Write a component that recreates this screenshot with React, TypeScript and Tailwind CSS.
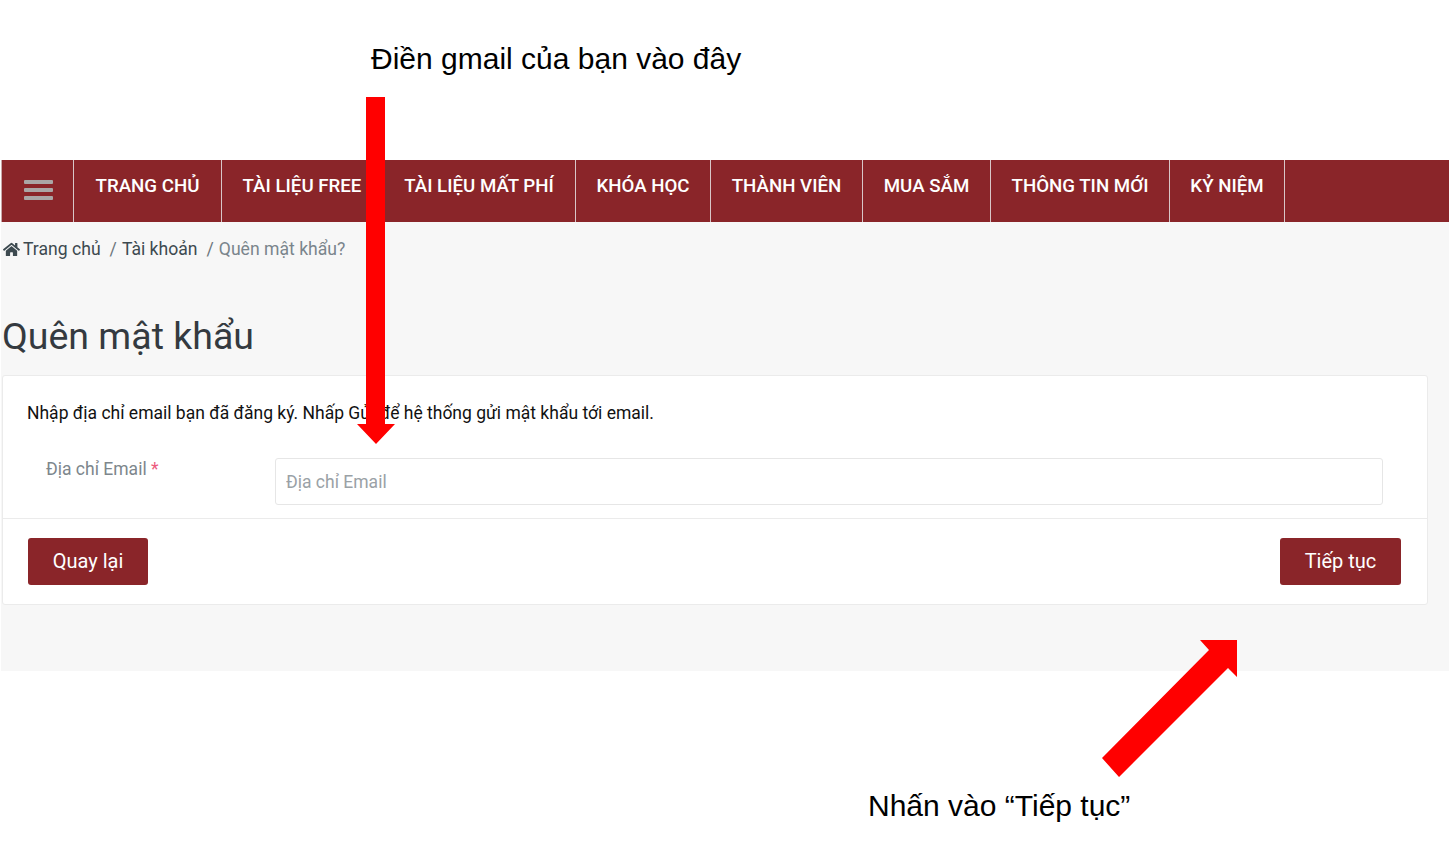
import React from 'react';
import { FaHome } from 'react-icons/fa';

const navItems = [
  { label: 'TRANG CHỦ', width: 'w-[148px]' },
  { label: 'TÀI LIỆU FREE', width: 'w-[161px]' },
  { label: 'TÀI LIỆU MẤT PHÍ', width: 'w-[193px]' },
  { label: 'KHÓA HỌC', width: 'w-[135px]' },
  { label: 'THÀNH VIÊN', width: 'w-[152px]' },
  { label: 'MUA SẮM', width: 'w-[128px]' },
  { label: 'THÔNG TIN MỚI', width: 'w-[179px]' },
  { label: 'KỶ NIỆM', width: 'w-[115px]' },
];

const App: React.FC = () => {
  return (
    <div className="relative w-[1449px] h-[860px] overflow-hidden bg-white font-['Roboto',sans-serif]">
      {/* Top note */}
      <div className="h-[160px] pl-[371px] pt-[40px] font-['Liberation_Sans',sans-serif] text-[30px] leading-[38px] text-black">
        Điền gmail của bạn vào đây
      </div>

      {/* Nav bar */}
      <nav className="flex h-[62px] ml-px bg-[#8a2529] text-white text-[18.7px] font-medium">
        <div className="w-px bg-[#c9a9aa] mr-px" />
        <div className="w-[71px] flex flex-col items-center justify-center gap-[4px] pb-[3px] pl-px border-r border-[#d9c6c7]">
          <span className="block w-[29px] h-[4px] rounded-[1px] bg-[#aaa6a6]" />
          <span className="block w-[29px] h-[4px] rounded-[1px] bg-[#aaa6a6]" />
          <span className="block w-[29px] h-[4px] rounded-[1px] bg-[#aaa6a6]" />
        </div>
        {navItems.map((item) => (
          <a
            key={item.label}
            href="#"
            className={`${item.width} flex justify-center pt-[13px] leading-[26px] border-r border-[#d9c6c7] whitespace-nowrap`}
          >
            {item.label}
          </a>
        ))}
      </nav>

      {/* Page */}
      <main className="h-[449px] ml-px bg-[#f7f7f7] pl-[1px] pr-[21px]">
        <div className="flex items-center h-[54px] text-[17.6px] text-[#3d4a50]">
          <FaHome className="w-[17px] h-[17px] ml-px mr-[3px]" />
          <span>Trang chủ</span>
          <span className="ml-[9px] mr-[5px] text-[#6c757d]">/</span>
          <span>Tài khoản</span>
          <span className="ml-[9px] mr-[5px] text-[#6c757d]">/</span>
          <span className="text-[#7a858c]">Quên mật khẩu?</span>
        </div>

        <h1 className="mt-[36px] text-[37.5px] leading-[48px] font-normal text-[#343a40]">Quên mật khẩu</h1>

        <div className="mt-[15px] h-[230px] bg-white border border-[#ebebeb] rounded-[3px]">
          <div className="h-[143px] border-b border-[#ebebeb] px-[24px] pt-[24px]">
            <p className="text-[17.5px] leading-[26px] text-[#111]">
              Nhập địa chỉ email bạn đã đăng ký. Nhấp Gửi để hệ thống gửi mật khẩu tới email.
            </p>
            <div className="flex mt-[32px] ml-[19px]">
              <label className="w-[229px] text-[17.5px] leading-[22px] text-[#7d868c]">
                Địa chỉ Email <span className="text-[#ec5a7d]">*</span>
              </label>
              <input
                placeholder="Địa chỉ Email"
                className="w-[1108px] h-[47px] px-[10px] text-[17.5px] bg-white border border-[#e6e6e6] rounded-[3px] outline-none placeholder:text-[#9aa1a6]"
              />
            </div>
          </div>
          <div className="flex justify-between pl-[25px] pr-[26px] pt-[19px]">
            <button className="w-[120px] h-[47px] pb-[2px] bg-[#8a2529] text-white text-[20px] rounded-[3px]">Quay lại</button>
            <button className="w-[121px] h-[47px] pb-[2px] bg-[#8a2529] text-white text-[20px] rounded-[3px]">Tiếp tục</button>
          </div>
        </div>
      </main>

      {/* Bottom note */}
      <div className="pl-[868px] pt-[115px] font-['Liberation_Sans',sans-serif] text-[30px] leading-[40px] text-black">
        Nhấn vào “Tiếp tục”
      </div>

      {/* Arrows drawn over the page */}
      <svg className="absolute left-0 top-0 pointer-events-none" width="1449" height="860">
        <polygon fill="#ff0000" points="366,97 385,97 385,424 395,424 376,444 357,424 366,424" />
        <polygon fill="#ff0000" points="1200,640 1237,640 1237,677 1228,668 1119,777 1102,758 1209,650" />
      </svg>
    </div>
  );
};

export default App;
